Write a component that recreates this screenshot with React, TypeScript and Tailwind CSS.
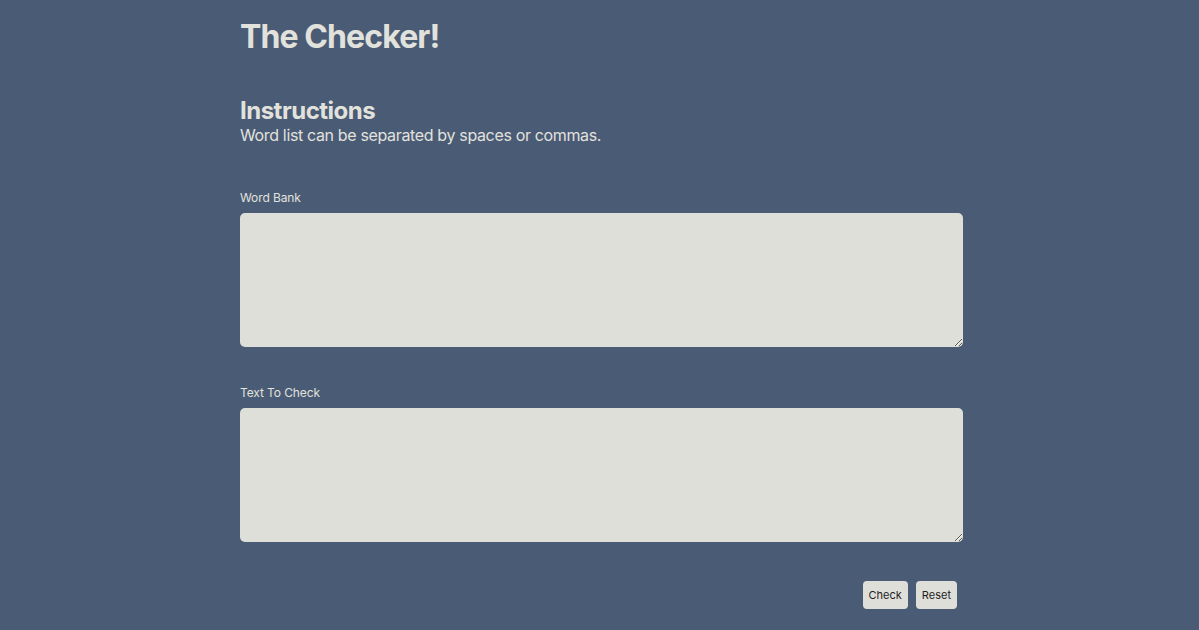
import React from "react";

export default function App() {
  return (
    <div className="min-h-[630px] w-full bg-[#4a5b75] text-[#e2e2dd]" style={{ fontFamily: "Inter, 'Noto Sans', sans-serif" }}>
      <div className="mx-auto w-[727px] pl-[4px] pt-[17px]">
        <h1 className="text-[32px] leading-[40px] font-bold tracking-[-0.9px]">The Checker!</h1>
        <h2 className="mt-[40px] text-[24px] leading-[28px] font-bold tracking-[-0.5px]">Instructions</h2>
        <p className="text-[16px] leading-[20px] tracking-[-0.35px]">Word list can be separated by spaces or commas.</p>
        <label className="mt-[45px] block text-[12px] leading-[16px] tracking-[-0.1px]">Word Bank</label>
        <textarea className="mt-[7px] block h-[134px] w-full resize-y rounded-[5px] bg-[#dfdfda] text-black outline-none" />
        <label className="mt-[38px] block text-[12px] leading-[16px] tracking-[-0.1px]">Text To Check</label>
        <textarea className="mt-[7px] block h-[134px] w-full resize-y rounded-[5px] bg-[#dfdfda] text-black outline-none" />
        <div className="mt-[39px] flex justify-end gap-[8px] pr-[6px]">
          <button className="h-[28px] rounded-[4px] bg-[#dfdfda] px-[6px] text-[11px] text-[#1e1e1e]">Check</button>
          <button className="h-[28px] rounded-[4px] bg-[#dfdfda] px-[6px] text-[11px] text-[#1e1e1e]">Reset</button>
        </div>
      </div>
    </div>
  );
}
